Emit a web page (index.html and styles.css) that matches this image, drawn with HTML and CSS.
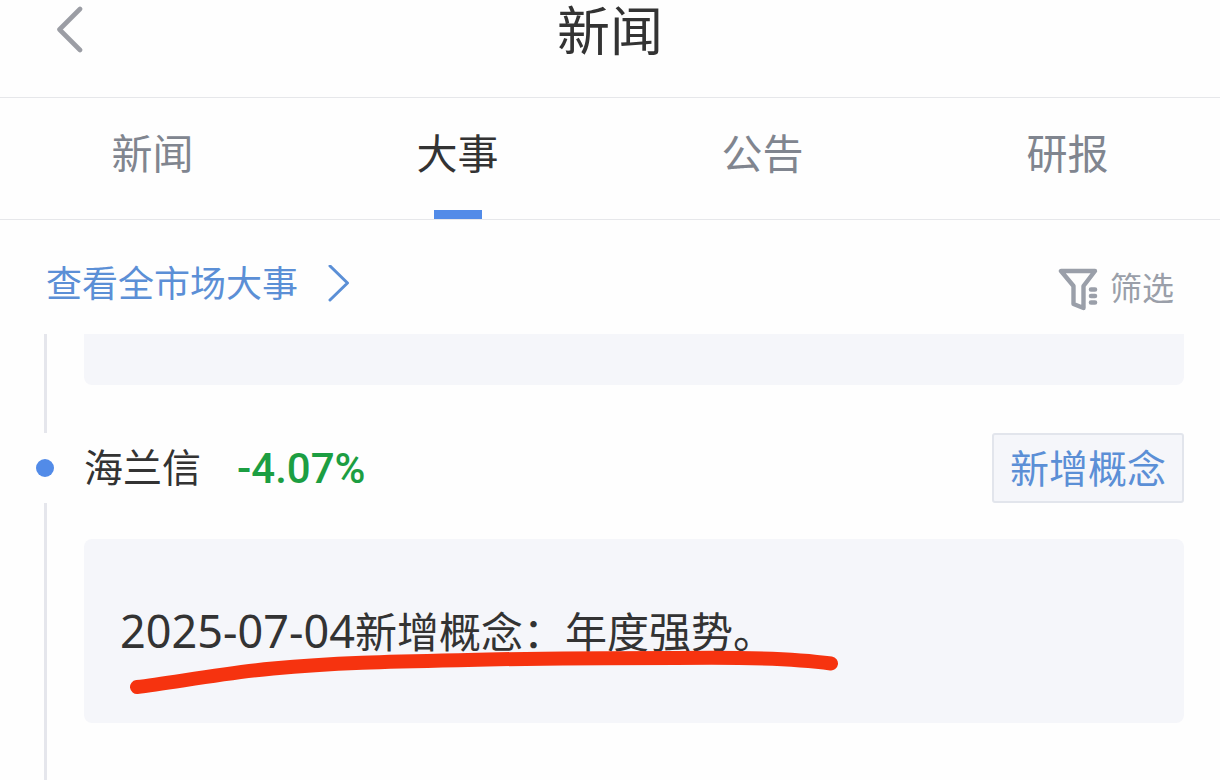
FILE: index.html
```html
<!DOCTYPE html>
<html lang="zh-CN">
<head>
<meta charset="utf-8">
<meta name="viewport" content="width=device-width, initial-scale=1">
<title>新闻</title>
<link rel="stylesheet" href="styles.css">
</head>
<body>
<header class="topbar">
  <button class="back" type="button" aria-label="返回">
    <svg width="28" height="48" viewBox="0 0 28 48" fill="none" stroke="#9b9da4" stroke-width="4.6" stroke-linecap="round" stroke-linejoin="round"><path d="M25 3 4.500 23.500 25 44"/></svg>
  </button>
  <h1 class="title">新闻</h1>
</header>
<nav class="tabs">
  <a class="tab" href="#news">新闻</a>
  <a class="tab tab-active" href="#events" aria-current="page">大事</a>
  <a class="tab" href="#notices">公告</a>
  <a class="tab" href="#reports">研报</a>
</nav>
<div class="toolbar">
  <a class="market-link" href="#market">查看全市场大事
    <svg width="24" height="40" viewBox="0 0 24 40" fill="none" stroke="#5b8fd6" stroke-width="3" stroke-linecap="round" stroke-linejoin="round"><path d="M2 1 19.500 18 2 35"/></svg>
  </a>
  <button class="filter" type="button">
    <svg width="40" height="44" viewBox="0 0 40 44" fill="none" stroke="#9a9fa9" stroke-width="4.400" stroke-linecap="round" stroke-linejoin="round"><path d="M3 4H37L25.500 19V41L15.500 37V19Z"/><path d="M33 22.500H37M33 29H37M33 35.500H37" stroke-width="4.600"/></svg>
    筛选
  </button>
</div>
<main class="timeline">
  <div class="line"></div>
  <div class="card card-previous"></div>
  <div class="dot"></div>
  <div class="stock">
    <h2 class="stock-name">海兰信</h2>
    <span class="change">-4.07%</span>
    <button class="tag" type="button">新增概念</button>
  </div>
  <div class="line"></div>
  <article class="card event">
    <p class="event-text"><time class="date" datetime="2025-07-04">2025-07-04</time>新增概念：年度强势。</p>
    <svg class="marker" width="712" height="48" viewBox="0 0 712 48" fill="none" stroke="#f6330f" stroke-width="14" stroke-linecap="round" stroke-linejoin="round"><path d="M9 38C43 34 96 24 145 19.500C207 13.500 267 12.500 340 11C413 9 479 9 548 9C617 8 667 9.500 703 14.500"/></svg>
  </article>
</main>
</body>
</html>
```
FILE: styles.css
```css
* { box-sizing: border-box; }

body {
  margin: 0;
  min-height: 100vh;
  display: flex;
  flex-direction: column;
  background: #fefefe;
  color: #333;
  font-family: "Liberation Sans", "Noto Sans CJK SC", sans-serif;
}

h1, h2, p { margin: 0; font-weight: 400; }
a { text-decoration: none; }
svg { display: block; flex: none; }

button {
  padding: 0;
  border: 0;
  background: none;
  font: inherit;
  cursor: pointer;
}

.topbar {
  display: grid;
  grid-template-columns: 1fr auto 1fr;
  align-items: center;
  padding: 0 55px 31px;
  border-bottom: 1px solid #e6e7ea;
}

.back {
  justify-self: start;
  padding-bottom: 6px;
}

.title {
  font-size: 53px;
  line-height: 66px;
  font-weight: 400;
}

.tabs {
  display: grid;
  grid-template-columns: repeat(4, 1fr);
  border-bottom: 1px solid #e6e7ea;
}

.tab {
  display: flex;
  flex-direction: column;
  align-items: center;
  padding-top: 33px;
  color: #80858f;
  font-size: 41px;
  line-height: 48px;
}

.tab::after {
  content: "";
  width: 48px;
  height: 9px;
  margin-top: 31px;
}

.tab-active { color: #333; }
.tab-active::after { background: #528be8; }

.toolbar {
  display: flex;
  justify-content: space-between;
  align-items: center;
  padding: 36px 46px 20px;
}

.market-link {
  display: flex;
  align-items: center;
  gap: 30px;
  color: #5b8fd6;
  font-size: 36px;
  line-height: 58px;
}

.filter {
  display: flex;
  align-items: center;
  gap: 12px;
  padding-top: 8px;
  color: #9a9fa9;
  font-size: 32px;
  line-height: 48px;
}

.timeline {
  flex: 1;
  display: grid;
  grid-template-columns: 48px 1fr;
  grid-template-rows: auto auto 1fr;
  padding: 0 36px;
}

.line {
  width: 3px;
  margin-left: 8px;
  background: #e5e6ec;
}

.dot {
  align-self: center;
  width: 18px;
  height: 18px;
  border-radius: 50%;
  background: #528be8;
}

.card {
  border-radius: 8px;
  background: #f5f6fa;
}

.card-previous {
  height: 51px;
  margin-bottom: 48px;
  border-radius: 0 0 8px 8px;
}

.stock {
  display: flex;
  align-items: center;
}

.stock-name {
  padding-top: 2px;
  font-size: 39px;
  line-height: 60px;
}

.change {
  padding-top: 2px;
  margin-left: 36px;
  color: #1c9e42;
  font-family: Roboto, sans-serif;
  font-size: 42px;
  font-weight: 500;
  line-height: 60px;
}

.tag {
  margin-left: auto;
  padding: 5px 16px 1px;
  border: 2px solid #e2e5ec;
  border-radius: 3px;
  background: #f5f6fa;
  color: #5b8fd6;
  font-size: 39px;
  line-height: 60px;
}

.event {
  position: relative;
  align-self: start;
  margin-top: 36px;
  padding: 62px 36px 59px;
}

.event-text {
  font-size: 42px;
  line-height: 60px;
}

.date {
  font-family: "Noto Sans", sans-serif;
  font-size: 45px;
}

.marker {
  position: absolute;
  left: 44px;
  top: 110px;
}
```
